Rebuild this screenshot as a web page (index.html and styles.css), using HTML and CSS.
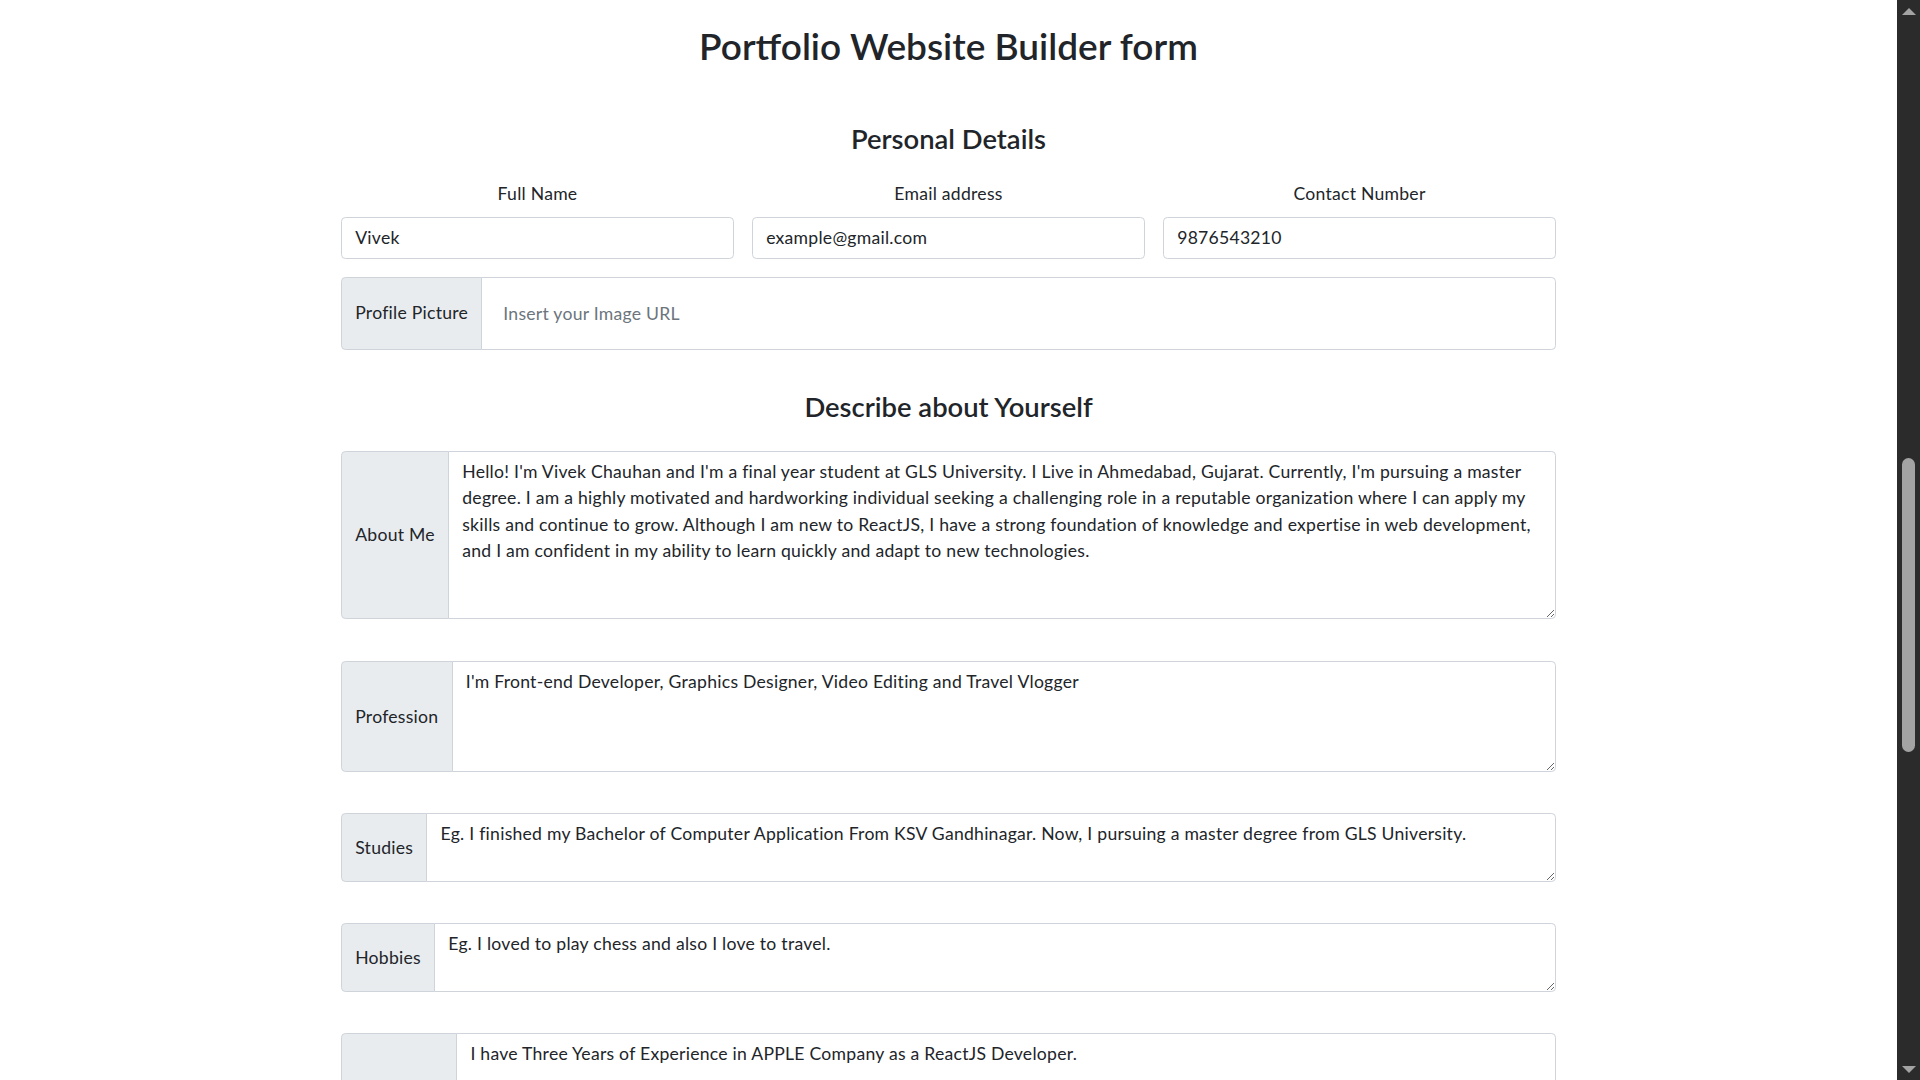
FILE: index.html
```html
<!DOCTYPE html>
<html lang="en">
<head>
<meta charset="utf-8">
<title>Portfolio Website Builder form</title>
<link rel="stylesheet" href="styles.css">
</head>
<body>
<div class="page">
  <main class="viewport">
    <form class="builder">
      <h1 class="title">Portfolio Website Builder form</h1>

      <h2 class="section-title section-personal">Personal Details</h2>
      <div class="field-row">
        <div class="field">
          <label class="field-label" for="fullname">Full Name</label>
          <input id="fullname" class="control" type="text" value="Vivek">
        </div>
        <div class="field">
          <label class="field-label" for="email">Email address</label>
          <input id="email" class="control" type="email" value="example@gmail.com">
        </div>
        <div class="field">
          <label class="field-label" for="phone">Contact Number</label>
          <input id="phone" class="control" type="text" value="9876543210">
        </div>
      </div>

      <div class="group group-profile">
        <span class="group-label">Profile Picture</span>
        <input class="control group-control control-lg" type="text" placeholder="Insert your Image URL">
      </div>

      <h2 class="section-title section-describe">Describe about Yourself</h2>

      <div class="group group-about">
        <span class="group-label">About Me</span>
        <textarea class="control group-control">Hello! I'm Vivek Chauhan and I'm a final year student at GLS University. I Live in Ahmedabad, Gujarat. Currently, I'm pursuing a master degree. I am a highly motivated and hardworking individual seeking a challenging role in a reputable organization where I can apply my skills and continue to grow. Although I am new to ReactJS, I have a strong foundation of knowledge and expertise in web development, and I am confident in my ability to learn quickly and adapt to new technologies.</textarea>
      </div>

      <div class="group group-profession">
        <span class="group-label">Profession</span>
        <textarea class="control group-control">I'm Front-end Developer, Graphics Designer, Video Editing and Travel Vlogger</textarea>
      </div>

      <div class="group group-studies">
        <span class="group-label">Studies</span>
        <textarea class="control group-control">Eg. I finished my Bachelor of Computer Application From KSV Gandhinagar. Now, I pursuing a master degree from GLS University.</textarea>
      </div>

      <div class="group group-hobbies">
        <span class="group-label">Hobbies</span>
        <textarea class="control group-control">Eg. I loved to play chess and also I love to travel.</textarea>
      </div>

      <div class="group group-experience">
        <span class="group-label">Experience</span>
        <textarea class="control group-control">I have Three Years of Experience in APPLE Company as a ReactJS Developer.</textarea>
      </div>
    </form>
  </main>
  <div class="scrollbar" aria-hidden="true">
    <span class="sb-arrow sb-up"></span>
    <span class="sb-thumb"></span>
    <span class="sb-arrow sb-down"></span>
  </div>
</div>
</body>
</html>
```
FILE: styles.css
```css
html, body {
  margin: 0;
  height: 100%;
  overflow: hidden;
}

body {
  font-family: Lato, "Segoe UI", "Noto Sans", sans-serif;
  font-size: 17.6px;
  line-height: 1.5;
  letter-spacing: 0.25px;
  color: #212529;
  background: #ffffff;
}

.page {
  display: flex;
  height: 100vh;
}

.viewport {
  flex: 1;
  min-width: 0;
  overflow: hidden;
}

.builder {
  width: 1215px;
  margin: 0 auto;
}

.title {
  margin: 24px 0 0;
  font-size: 37px;
  font-weight: 600;
  line-height: 44.4px;
  letter-spacing: 0;
  text-align: center;
}

.section-title {
  margin: 0;
  font-size: 27.4px;
  font-weight: 600;
  line-height: 31.7px;
  letter-spacing: 0;
  text-align: center;
}

.section-personal {
  margin-top: 55px;
}

.section-describe {
  margin-top: 41.5px;
}

.field-row {
  display: grid;
  grid-template-columns: repeat(3, 1fr);
  column-gap: 18px;
  margin-top: 26px;
}

.field-label {
  display: block;
  text-align: center;
  margin-bottom: 9px;
}

.control {
  box-sizing: border-box;
  display: block;
  width: 100%;
  margin: 0;
  font: inherit;
  letter-spacing: inherit;
  color: #212529;
  background: #ffffff;
  border: 1px solid #ced4da;
  border-radius: 4.4px;
  padding: 6.6px 13.2px;
  outline: none;
}

.field .control {
  height: 42px;
}

.control::placeholder {
  color: #6c757d;
  opacity: 1;
}

textarea.control {
  resize: vertical;
}

.group {
  display: flex;
  align-items: stretch;
  margin-top: 41px;
}

.group-label {
  box-sizing: border-box;
  display: flex;
  align-items: center;
  padding: 6.6px 13.2px;
  background: #e9ecef;
  border: 1px solid #ced4da;
  border-radius: 4.4px 0 0 4.4px;
  white-space: nowrap;
}

.group-control {
  flex: 1;
  min-width: 0;
  width: auto;
  height: 100%;
  margin-left: -1px;
  border-radius: 0 4.4px 4.4px 0;
}

.control-lg {
  padding: 22px 22px 22px 21px;
}

.group-profile {
  margin-top: 18px;
  height: 73px;
}

.group-about {
  margin-top: 28.5px;
  height: 168px;
}

.group-profession {
  margin-top: 42px;
  height: 111px;
}

.group-studies,
.group-hobbies {
  height: 69px;
}

.group-experience {
  height: 130px;
}

/* dark scrollbar column */
.scrollbar {
  flex: 0 0 23px;
  background: #2b2b2b;
  display: flex;
  flex-direction: column;
  align-items: center;
}

.sb-arrow {
  width: 0;
  height: 0;
  border-left: 7px solid transparent;
  border-right: 7px solid transparent;
}

.sb-up {
  margin-top: 8px;
  border-bottom: 7px solid #a3a3a3;
}

.sb-thumb {
  width: 13px;
  height: 294px;
  margin-top: 443px;
  border-radius: 7px;
  background: #a3a3a3;
}

.sb-down {
  margin-top: auto;
  margin-bottom: 7px;
  border-top: 7px solid #a3a3a3;
}
```
